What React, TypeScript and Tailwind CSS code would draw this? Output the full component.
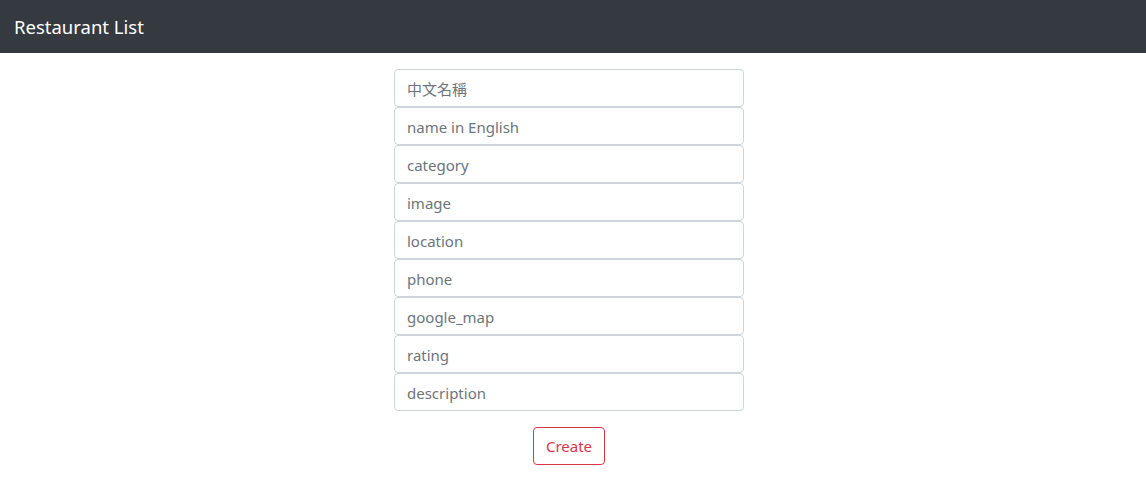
const fields = [
  "中文名稱",
  "name in English",
  "category",
  "image",
  "location",
  "phone",
  "google_map",
  "rating",
  "description",
];

export default function App() {
  return (
    <div className="min-h-[496px] bg-white font-['Noto_Sans','Noto_Sans_CJK_TC',sans-serif]">
      {/* Navbar */}
      <nav className="flex h-[53px] items-center bg-[#343a40] pl-[14px]">
        <span className="text-[18.5px] text-white">Restaurant List</span>
      </nav>

      {/* Form */}
      <div className="flex justify-center pr-2">
        <form className="mt-4 flex w-[350px] flex-col">
          {fields.map((f) => (
            <input
              key={f}
              type="text"
              placeholder={f}
              className="h-[38px] w-full rounded-[4px] border border-[#ced4da] px-3 pt-[2px] text-[15px] text-[#495057] placeholder:text-[#6c757d] outline-none"
            />
          ))}
          <div className="mt-4 flex justify-center">
            <button
              type="button"
              className="h-[38px] w-[72px] rounded-[4px] border border-[#dc3545] pt-[1px] text-[15px] text-[#dc3545]"
            >
              Create
            </button>
          </div>
        </form>
      </div>
    </div>
  );
}
